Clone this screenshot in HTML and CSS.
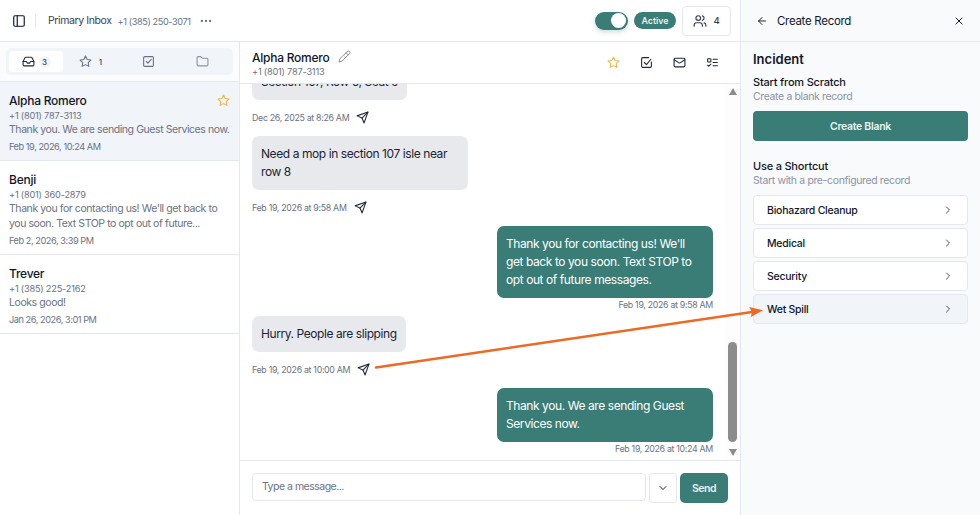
FILE: index.html
```html
<!DOCTYPE html>
<html lang="en">
<head>
<meta charset="utf-8">
<title>Primary Inbox</title>
<link rel="stylesheet" href="styles.css">
</head>
<body>
<div class="app">
  <div class="main">
    <header class="topbar">
      <button class="icon-plain toggle-side"><svg class="ic ic-16" viewBox="0 0 24 24"><rect x="3" y="3" width="18" height="18" rx="2"/><path d="M9 3v18"/></svg></button>
      <span class="vline"></span>
      <span class="inbox-name">Primary Inbox</span>
      <span class="inbox-phone">+1 (385) 250-3071</span>
      <svg class="ic ic-14 dots" viewBox="0 0 24 24"><circle cx="5" cy="12" r="1"/><circle cx="12" cy="12" r="1"/><circle cx="19" cy="12" r="1"/></svg>
      <span class="spacer"></span>
      <span class="switch"><span class="knob"></span></span>
      <span class="badge">Active</span>
      <button class="users-btn"><svg class="ic ic-14" viewBox="0 0 24 24"><path d="M16 21v-2a4 4 0 0 0-4-4H6a4 4 0 0 0-4 4v2"/><circle cx="9" cy="7" r="4"/><path d="M22 21v-2a4 4 0 0 0-3-3.87"/><path d="M16 3.13a4 4 0 0 1 0 7.75"/></svg><span>4</span></button>
    </header>
    <div class="body">
      <aside class="sidebar">
        <div class="tabs-wrap">
          <div class="tabs">
            <div class="tab active"><svg class="ic ic-13 dark" viewBox="0 0 24 24"><polyline points="22 12 16 12 14 15 10 15 8 12 2 12"/><path d="M5.45 5.11 2 12v6a2 2 0 0 0 2 2h16a2 2 0 0 0 2-2v-6l-3.45-6.89A2 2 0 0 0 16.76 4H7.24a2 2 0 0 0-1.79 1.11z"/></svg><span class="count pill">3</span></div>
            <div class="tab star-tab"><svg class="ic ic-13" viewBox="0 0 24 24"><polygon points="12 2 15.09 8.26 22 9.27 17 14.14 18.18 21.02 12 17.77 5.82 21.02 7 14.14 2 9.27 8.91 8.26 12 2"/></svg><span class="count">1</span></div>
            <div class="tab"><svg class="ic ic-13" viewBox="0 0 24 24"><rect x="3" y="3" width="18" height="18" rx="2"/><path d="m8 12 3 3 6-7"/></svg></div>
            <div class="tab"><svg class="ic ic-13 soft" viewBox="0 0 24 24"><path d="M20 20a2 2 0 0 0 2-2V8a2 2 0 0 0-2-2h-7.9a2 2 0 0 1-1.69-.9L9.6 3.9A2 2 0 0 0 7.93 3H4a2 2 0 0 0-2 2v13a2 2 0 0 0 2 2Z"/></svg></div>
          </div>
        </div>
        <div class="conv selected">
          <div class="conv-name">Alpha Romero</div>
          <svg class="ic ic-13 gold conv-star" viewBox="0 0 24 24"><polygon points="12 2 15.09 8.26 22 9.27 17 14.14 18.18 21.02 12 17.77 5.82 21.02 7 14.14 2 9.27 8.91 8.26 12 2"/></svg>
          <div class="conv-phone">+1 (801) 787-3113</div>
          <div class="conv-text">Thank you. We are sending Guest Services now.</div>
          <div class="conv-date">Feb 19, 2026, 10:24 AM</div>
        </div>
        <div class="conv">
          <div class="conv-name">Benji</div>
          <div class="conv-phone">+1 (801) 360-2879</div>
          <div class="conv-text">Thank you for contacting us! We'll get back to you soon. Text STOP to opt out of future...</div>
          <div class="conv-date">Feb 2, 2026, 3:39 PM</div>
        </div>
        <div class="conv">
          <div class="conv-name">Trever</div>
          <div class="conv-phone">+1 (385) 225-2162</div>
          <div class="conv-text">Looks good!</div>
          <div class="conv-date">Jan 26, 2026, 3:01 PM</div>
        </div>
      </aside>
      <section class="chat">
        <div class="chat-head">
          <div class="chat-id">
            <div class="chat-name"><span>Alpha Romero</span><svg class="ic ic-13 pencil" viewBox="0 0 24 24"><path d="M17 3a2.85 2.83 0 1 1 4 4L7.5 20.5 2 22l1.5-5.5Z"/><path d="m15 5 4 4"/></svg></div>
            <div class="chat-phone">+1 (801) 787-3113</div>
          </div>
          <div class="chat-actions">
            <svg class="ic ic-13 gold" viewBox="0 0 24 24"><polygon points="12 2 15.09 8.26 22 9.27 17 14.14 18.18 21.02 12 17.77 5.82 21.02 7 14.14 2 9.27 8.91 8.26 12 2"/></svg>
            <svg class="ic ic-13 dark" viewBox="0 0 24 24"><path d="M21 11v8a2 2 0 0 1-2 2H5a2 2 0 0 1-2-2V5a2 2 0 0 1 2-2h11"/><path d="m8 12 4 4 8-10"/></svg>
            <svg class="ic ic-13 dark" viewBox="0 0 24 24"><rect x="2" y="4" width="20" height="16" rx="2"/><path d="m22 7-8.97 5.7a1.94 1.94 0 0 1-2.06 0L2 7"/></svg>
            <svg class="ic ic-13 dark" viewBox="0 0 24 24"><rect x="3" y="5" width="6" height="6" rx="1"/><path d="m3 17 2 2 4-4"/><path d="M13 6h8"/><path d="M13 12h8"/><path d="M13 18h8"/></svg>
          </div>
        </div>
        <div class="thread-row">
          <div class="thread">
            <div class="msg in"><div class="bubble">Section 107, Row 5, Seat 9</div></div>
            <div class="stamp in">Dec 26, 2025 at 8:26 AM<svg class="ic ic-13 dark" viewBox="0 0 24 24"><path d="m22 2-7 20-4-9-9-4Z"/><path d="M22 2 11 13"/></svg></div>
            <div class="msg in"><div class="bubble">Need a mop in section 107 isle near row 8</div></div>
            <div class="stamp in">Feb 19, 2026 at 9:58 AM<svg class="ic ic-13 dark" viewBox="0 0 24 24"><path d="m22 2-7 20-4-9-9-4Z"/><path d="M22 2 11 13"/></svg></div>
            <div class="msg out"><div class="bubble">Thank you for contacting us! We'll get back to you soon. Text STOP to opt out of future messages.</div></div>
            <div class="stamp out">Feb 19, 2026 at 9:58 AM</div>
            <div class="msg in"><div class="bubble">Hurry. People are slipping</div></div>
            <div class="stamp in">Feb 19, 2026 at 10:00 AM<svg class="ic ic-13 dark" viewBox="0 0 24 24"><path d="m22 2-7 20-4-9-9-4Z"/><path d="M22 2 11 13"/></svg></div>
            <div class="msg out"><div class="bubble">Thank you. We are sending Guest Services now.</div></div>
            <div class="stamp out">Feb 19, 2026 at 10:24 AM</div>
          </div>
          <div class="scrollbar">
            <span class="arrow up"></span>
            <span class="thumb"></span>
            <span class="arrow down"></span>
          </div>
        </div>
        <div class="composer">
          <div class="input">Type a message...</div>
          <button class="more"><svg class="ic ic-12 dark" viewBox="0 0 24 24"><path d="m6 9 6 6 6-6"/></svg></button>
          <button class="send">Send</button>
        </div>
      </section>
    </div>
  </div>
  <aside class="panel">
    <div class="panel-head">
      <svg class="ic ic-12 dark" viewBox="0 0 24 24"><path d="m12 19-7-7 7-7"/><path d="M19 12H5"/></svg>
      <span class="panel-title">Create Record</span>
      <svg class="ic ic-12 black" viewBox="0 0 24 24"><path d="M18 6 6 18"/><path d="m6 6 12 12"/></svg>
    </div>
    <div class="panel-body">
      <h2 class="panel-h">Incident</h2>
      <h3 class="sub-h">Start from Scratch</h3>
      <p class="sub-p">Create a blank record</p>
      <button class="create">Create Blank</button>
      <h3 class="sub-h second">Use a Shortcut</h3>
      <p class="sub-p">Start with a pre-configured record</p>
      <div class="shortcuts">
        <div class="shortcut"><span>Biohazard Cleanup</span><svg class="ic ic-12" viewBox="0 0 24 24"><path d="m9 18 6-6-6-6"/></svg></div>
        <div class="shortcut"><span>Medical</span><svg class="ic ic-12" viewBox="0 0 24 24"><path d="m9 18 6-6-6-6"/></svg></div>
        <div class="shortcut"><span>Security</span><svg class="ic ic-12" viewBox="0 0 24 24"><path d="m9 18 6-6-6-6"/></svg></div>
        <div class="shortcut hover"><span>Wet Spill</span><svg class="ic ic-12" viewBox="0 0 24 24"><path d="m9 18 6-6-6-6"/></svg></div>
      </div>
    </div>
  </aside>
  <svg class="callout" viewBox="0 0 980 515"><path class="callout-line" d="M376 367.5 752 312"/><path class="callout-head" d="M763 310.3 749.3 307 752 312 750.8 317Z"/></svg>
</div>
</body>
</html>
```

FILE: styles.css
```css
* { box-sizing: border-box; }
html, body { margin: 0; height: 100%; }
body { font-family: Inter, "Liberation Sans", sans-serif; color: #111827; background: #fff; overflow: hidden; }
button { font-family: inherit; border: 0; background: none; padding: 0; }
h2, h3, p { margin: 0; }

.app { position: relative; display: flex; width: 980px; height: 515px; }
.main { flex: none; width: 741px; height: 515px; display: flex; flex-direction: column; border-right: 1px solid #e5e7f0; }

.ic { fill: none; stroke: #6b7280; stroke-width: 2; stroke-linecap: round; stroke-linejoin: round; flex: none; display: block; }
.ic-16 { width: 14px; height: 14px; stroke: #111827; }
.ic-14 { width: 14px; height: 14px; }
.ic-13 { width: 13px; height: 13px; }
.ic-12 { width: 12px; height: 12px; }
.dark { stroke: #1f2937; }
.black { stroke: #111827; }
.gold { stroke: #eab94a; }
.soft { stroke: #8b93a1; }

.topbar { flex: none; height: 42px; display: flex; align-items: center; padding: 0 9px 0 12px; border-bottom: 1px solid #e5e7eb; }
.toggle-side { display: block; }
.vline { width: 1px; height: 13px; background: #e5e7eb; margin: 0 12px 0 9px; }
.inbox-name { font-size: 10.5px; letter-spacing: -.4px; color: #374151; }
.inbox-phone { font-size: 9.2px; letter-spacing: -.4px; color: #6b7280; margin-left: 6px; margin-top: 1px; }
.dots { margin-left: 8px; margin-top: 1px; stroke: #6b7280; }
.spacer { flex: 1; }
.switch { width: 33px; height: 18px; border-radius: 9px; background: #3a7d76; display: flex; justify-content: flex-end; padding: 1.5px 2px; box-shadow: 0 2px 5px rgba(58,125,118,.25); }
.knob { width: 15px; height: 15px; border-radius: 50%; background: #fff; }
.badge { margin-left: 6px; width: 42px; height: 17px; border-radius: 9px; background: #3a7d76; color: #e7f2f0; font-size: 8.8px; font-weight: 600; display: flex; align-items: center; justify-content: center; }
.users-btn { margin-left: 6px; width: 49px; height: 30px; border: 1px solid #e5e7f0; border-radius: 4px; display: flex; align-items: center; justify-content: center; gap: 6px; font-size: 9.5px; font-weight: 500; color: #374151; }
.users-btn .ic { stroke: #374151; }

.body { flex: 1; min-height: 0; display: flex; }
.sidebar { flex: none; width: 240px; border-right: 1px solid #e5e7eb; }
.tabs-wrap { height: 40px; padding: 6px 6px 0; background: #fbfcfe; border-bottom: 1px solid #e5e7f0; }
.tabs { height: 27px; padding: 3px; display: flex; background: #f1f4f9; border-radius: 5px; }
.tab { flex: 1; display: flex; align-items: center; justify-content: center; gap: 5px; border-radius: 4px; }
.tab.active { background: #fff; }
.star-tab { gap: 7px; padding-right: 4px; }
.count { font-size: 8px; color: #374151; font-weight: 500; }
.count.pill { width: 12px; height: 12px; border-radius: 50%; background: #f1f4f9; display: flex; align-items: center; justify-content: center; margin-left: -1px; }

.conv { position: relative; padding: 12px 9px 7px; border-bottom: 1px solid #e5e7f0; }
.conv.selected { background: #f1f4f9; }
.conv-name { font-size: 12px; font-weight: 500; letter-spacing: -.25px; line-height: 14px; color: #0f172a; }
.conv-star { position: absolute; top: 12px; right: 9px; }
.conv-phone { font-size: 9.2px; letter-spacing: -.2px; line-height: 13px; color: #6b7280; margin-top: 1px; }
.conv-text { font-size: 10.5px; letter-spacing: -.42px; line-height: 15px; color: #6b7280; }
.conv-date { font-size: 9.2px; letter-spacing: -.45px; line-height: 13px; color: #6b7280; margin-top: 3px; }

.chat { flex: 1; min-width: 0; display: flex; flex-direction: column; }
.chat-head { flex: none; height: 42px; padding: 3px 12px 0; display: flex; align-items: center; justify-content: space-between; border-bottom: 1px solid #e5e7f0; }
.chat-name { display: flex; align-items: center; gap: 9px; font-size: 12px; font-weight: 500; letter-spacing: -.25px; line-height: 15px; color: #0f172a; }
.pencil { stroke: #6b7280; stroke-width: 1.5; margin-top: -2px; }
.chat-phone { font-size: 9.2px; letter-spacing: -.2px; line-height: 13px; color: #6b7280; }
.chat-actions { display: flex; align-items: center; gap: 20px; margin-right: 9px; margin-top: -3px; }

.thread-row { flex: 1; min-height: 0; display: flex; }
.thread { flex: 1; min-width: 0; display: flex; flex-direction: column; justify-content: flex-end; overflow: hidden; padding: 0 12px; }
.msg { display: flex; flex: none; }
.msg.out { justify-content: flex-end; }
.bubble { max-width: 216px; padding: 9px; border-radius: 7px; font-size: 12px; letter-spacing: -.42px; line-height: 18px; }
.in .bubble { background: #e8e9ed; color: #1c2333; }
.out .bubble { background: #3a7d76; color: #fff; width: 216px; }
.stamp { flex: none; font-size: 8.8px; letter-spacing: -.3px; line-height: 13px; color: #6b7280; display: flex; align-items: center; }
.stamp.in { margin: 11px 0 12px; }
.stamp.in .ic { margin-left: 7px; }
.stamp.out { justify-content: flex-end; margin: 0 0 5px; }

.scrollbar { flex: none; width: 15px; display: flex; flex-direction: column; align-items: center; padding: 4px 0; background: #fdfdfd; }
.arrow { flex: none; width: 0; height: 0; border-left: 4.5px solid transparent; border-right: 4.5px solid transparent; }
.arrow.up { border-bottom: 7px solid #8c8c8c; }
.arrow.down { border-top: 7px solid #8c8c8c; margin-top: 7px; }
.thumb { margin-top: auto; width: 9px; height: 100px; border-radius: 5px; background: #8c8c8c; }

.composer { flex: none; height: 55px; padding: 12px 12px 0; display: flex; align-items: flex-start; border-top: 1px solid #e5e7f0; }
.input { flex: none; width: 394px; height: 28px; padding: 0 9px; border: 1px solid #e5e7f0; border-radius: 4px; font-size: 10.5px; letter-spacing: -.5px; line-height: 26px; color: #6b7280; }
.more { flex: none; margin-left: 3px; width: 28px; height: 30px; border: 1px solid #e5e7f0; border-radius: 4px; display: flex; align-items: center; justify-content: center; }
.send { flex: none; margin-left: 3px; width: 48px; height: 30px; border-radius: 5px; background: #3a7d76; color: #e7f2f0; font-size: 10.5px; font-weight: 600; letter-spacing: -.5px; }

.panel { flex: none; width: 239px; height: 515px; background: #f9fafb; }
.panel-head { height: 42px; padding: 1px 15px 0; display: flex; align-items: center; border-bottom: 1px solid #e5e7f0; }
.panel-title { flex: 1; margin-left: 9px; font-size: 11.5px; letter-spacing: -.3px; color: #111827; }
.panel-body { padding: 9px 12px; }
.panel-h { font-size: 13px; font-weight: 600; line-height: 16px; color: #111827; }
.sub-h { margin-top: 8px; font-size: 11px; font-weight: 500; letter-spacing: -.2px; line-height: 14px; color: #111827; }
.sub-h.second { margin-top: 18px; }
.sub-p { font-size: 10.5px; letter-spacing: -.37px; line-height: 15px; color: #8a94a6; }
.create { display: block; width: 215px; height: 30px; margin-top: 7px; border-radius: 4px; background: #3a7d76; color: #e7f2f0; font-size: 10.5px; font-weight: 600; letter-spacing: -.3px; }
.shortcuts { margin-top: 7px; display: flex; flex-direction: column; gap: 3px; width: 215px; }
.shortcut { height: 30px; padding: 0 13px; display: flex; align-items: center; justify-content: space-between; background: #fff; border: 1px solid #e5e7f0; border-radius: 4px; font-size: 10.5px; font-weight: 500; letter-spacing: -.25px; color: #111827; }
.shortcut .ic { stroke: #4b5563; }
.shortcut.hover { background: #f1f4f9; }

.callout { position: absolute; inset: 0; width: 980px; height: 515px; pointer-events: none; }
.callout-line { fill: none; stroke: #ec6a25; stroke-width: 2.5; stroke-linecap: round; }
.callout-head { fill: #ec6a25; }
```
